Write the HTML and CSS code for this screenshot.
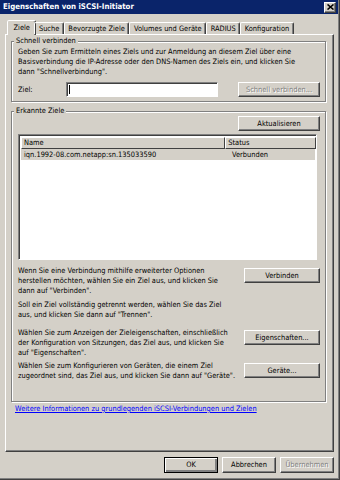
FILE: index.html
```html
<!DOCTYPE html>
<html lang="de">
<head>
  <meta charset="UTF-8" />
  <title>Eigenschaften von iSCSI-Initiator</title>
  <link rel="stylesheet" href="styles.css">
</head>
<body>
  <div class="window">
    <div class="titlebar">
      <span class="title">Eigenschaften von iSCSI-Initiator</span>
      <span class="close">
        <svg width="7" height="6" viewBox="0 0 7 6"><path d="M0.5 0.5 L6.5 5.5 M6.5 0.5 L0.5 5.5" stroke="#000" stroke-width="1.6"/></svg>
      </span>
    </div>

    <div class="tabs">
      <span class="tab active">Ziele</span>
      <span class="tab">Suche</span>
      <span class="tab">Bevorzugte Ziele</span>
      <span class="tab">Volumes und Geräte</span>
      <span class="tab">RADIUS</span>
      <span class="tab">Konfiguration</span>
    </div>

    <div class="panel">
      <fieldset class="group quick">
        <legend>Schnell verbinden</legend>
        <p class="hint">Geben Sie zum Ermitteln eines Ziels und zur Anmeldung an diesem Ziel über eine<br>Basisverbindung die IP-Adresse oder den DNS-Namen des Ziels ein, und klicken Sie<br>dann "Schnellverbindung".</p>
        <div class="target-row">
          <label class="target-label">Ziel:</label>
          <span class="field"><span class="caret"></span></span>
          <button class="btn wide" disabled>Schnell verbinden...</button>
        </div>
      </fieldset>

      <fieldset class="group found">
        <legend>Erkannte Ziele</legend>
        <div class="refresh-row">
          <button class="btn wide">Aktualisieren</button>
        </div>
        <div class="list">
          <div class="list-head">
            <span class="col-name">Name</span>
            <span class="col-status">Status</span>
          </div>
          <div class="list-row selected">
            <span class="col-name">iqn.1992-08.com.netapp:sn.135033590</span>
            <span class="col-status">Verbunden</span>
          </div>
        </div>

        <div class="action first">
          <div class="texts">
            <p>Wenn Sie eine Verbindung mithilfe erweiterter Optionen<br>herstellen möchten, wählen Sie ein Ziel aus, und klicken Sie<br>dann auf "Verbinden".</p>
            <p>Soll ein Ziel vollständig getrennt werden, wählen Sie das Ziel<br>aus, und klicken Sie dann auf "Trennen".</p>
          </div>
          <button class="btn">Verbinden</button>
        </div>
        <div class="action">
          <p>Wählen Sie zum Anzeigen der Zieleigenschaften, einschließlich<br>der Konfiguration von Sitzungen, das Ziel aus, und klicken Sie<br>auf "Eigenschaften".</p>
          <button class="btn">Eigenschaften...</button>
        </div>
        <div class="action last">
          <p>Wählen Sie zum Konfigurieren von Geräten, die einem Ziel<br>zugeordnet sind, das Ziel aus, und klicken Sie dann auf "Geräte".</p>
          <button class="btn">Geräte...</button>
        </div>
      </fieldset>

      <a class="more" href="#">Weitere Informationen zu grundlegenden iSCSI-Verbindungen und Zielen</a>
    </div>

    <div class="footer">
      <button class="btn default">OK</button>
      <button class="btn">Abbrechen</button>
      <button class="btn" disabled>Übernehmen</button>
    </div>
  </div>
</body>
</html>
```

FILE: styles.css
```css
body {
  margin: 0;
  background: #d4d0c8;
  font-family: "DejaVu Sans Condensed", "DejaVu Sans", sans-serif;
  font-size: 7.4px;
  line-height: 10px;
  color: #000;
}

.window {
  width: 339px;
  height: 479px;
  border-right: 1px solid #404040;
  border-bottom: 1px solid #404040;
  box-shadow: inset -1px -1px 0 #808080;
  display: flex;
  flex-direction: column;
}

.titlebar {
  height: 14px;
  margin-right: 1px;
  background: #0a246a;
  display: flex;
  align-items: center;
  justify-content: space-between;
  padding: 0 2px 0 3px;
}
.title {
  color: #fff;
  font-weight: bold;
  font-size: 7.8px;
}
.close {
  width: 10px;
  height: 9px;
  background: #d4d0c8;
  border: 1px solid;
  border-color: #fff #404040 #404040 #fff;
  box-shadow: inset -1px -1px 0 #808080;
  display: flex;
  align-items: center;
  justify-content: center;
}

/* tabs */
.tabs {
  display: flex;
  align-items: flex-end;
  margin-top: 6px;
  padding-left: 9px;
  height: 14px;
  position: relative;
  z-index: 1;
}
.tab {
  height: 11px;
  line-height: 11px;
  padding: 0 3.5px;
  border: 1px solid;
  border-bottom: none;
  border-color: #fff #404040 transparent #fff;
  box-shadow: inset -1px 0 0 #808080;
  border-radius: 2px 2px 0 0;
}
.tab.active {
  height: 14px;
  line-height: 13px;
  margin: 0 -2px -1px;
  padding: 0 5.5px;
  background: #d4d0c8;
}

.panel {
  margin: 0 5px;
  height: 418px;
  border: 1px solid;
  border-color: #fff #404040 #404040 #fff;
  box-shadow: inset -1px -1px 0 #808080;
  padding-top: 1px;
  box-sizing: border-box;
}

/* group boxes */
.group {
  margin: 0 7px 0 5px;
  padding: 0 5px 0 6px;
  border: 1px solid #808080;
  box-shadow: inset 1px 1px 0 #fff, 1px 1px 0 #fff;
  min-inline-size: 0;
}
.group legend {
  margin-left: -4px;
  padding: 0 2px;
  background: #d4d0c8;
}
.hint {
  margin: 1px 0 0;
}
.target-row {
  display: flex;
  align-items: center;
  margin: 5px 0 4px;
}
.target-label {
  width: 48px;
}
.field {
  width: 148px;
  height: 13px;
  background: #fff;
  border: 1px solid;
  border-color: #808080 #fff #fff #808080;
  box-shadow: inset 1px 1px 0 #404040;
  display: flex;
  align-items: center;
  padding-left: 2px;
}
.caret {
  width: 1px;
  height: 9px;
  background: #000;
}
.target-row .btn {
  margin-left: auto;
}

.found {
  margin-top: 4px;
  padding-bottom: 20px;
}
.refresh-row {
  display: flex;
  justify-content: flex-end;
}

/* buttons */
.btn {
  font: inherit;
  color: #000;
  width: 76px;
  height: 15px;
  padding: 0;
  background: #d4d0c8;
  border: 1px solid;
  border-color: #fff #404040 #404040 #fff;
  box-shadow: inset -1px -1px 0 #808080;
  flex-shrink: 0;
}
.btn.wide {
  width: 82px;
}
.btn:disabled {
  color: #808080;
  text-shadow: 1px 1px 0 #fff;
}
.btn.default {
  border-color: #000;
  box-shadow: inset 1px 1px 0 #fff, inset -2px -2px 0 #808080;
}

/* list view */
.list {
  margin: 3px 3px 0 0;
  height: 126px;
  background: #fff;
  border: 1px solid;
  border-color: #808080 #fff #fff #808080;
  box-shadow: inset 1px 1px 0 #404040;
  padding: 2px 0 0 2px;
  box-sizing: border-box;
}
.list-head,
.list-row {
  display: flex;
}
.list-head span {
  height: 10px;
  line-height: 10px;
  background: #d4d0c8;
  border: 1px solid;
  border-color: #fff #404040 #404040 #fff;
  padding-left: 2px;
}
.list-head .col-name {
  width: 201px;
}
.list-head .col-status {
  width: 87px;
}
.list-row {
  height: 11px;
  line-height: 11px;
  margin-right: 1px;
}
.list-row.selected {
  background: #d4d0c8;
}
.list-row .col-name {
  width: 204px;
  padding-left: 3px;
}
.list-row .col-status {
  padding-left: 4px;
}

.action {
  display: flex;
  justify-content: space-between;
  align-items: flex-start;
  margin-top: 8px;
}
.action.first {
  margin-top: 6px;
}
.action.last {
  margin-top: 3px;
}
.action p {
  margin: 0;
}
.texts p + p {
  margin-top: 4px;
}
.action .btn {
  margin-top: 2px;
}

.more {
  display: block;
  margin: 2px 0 0 9px;
  color: #0000ff;
}

.footer {
  display: flex;
  justify-content: flex-end;
  gap: 4px;
  margin-top: 5px;
  padding-right: 5px;
}
.footer .btn {
  width: 54px;
  height: 16px;
}
```
